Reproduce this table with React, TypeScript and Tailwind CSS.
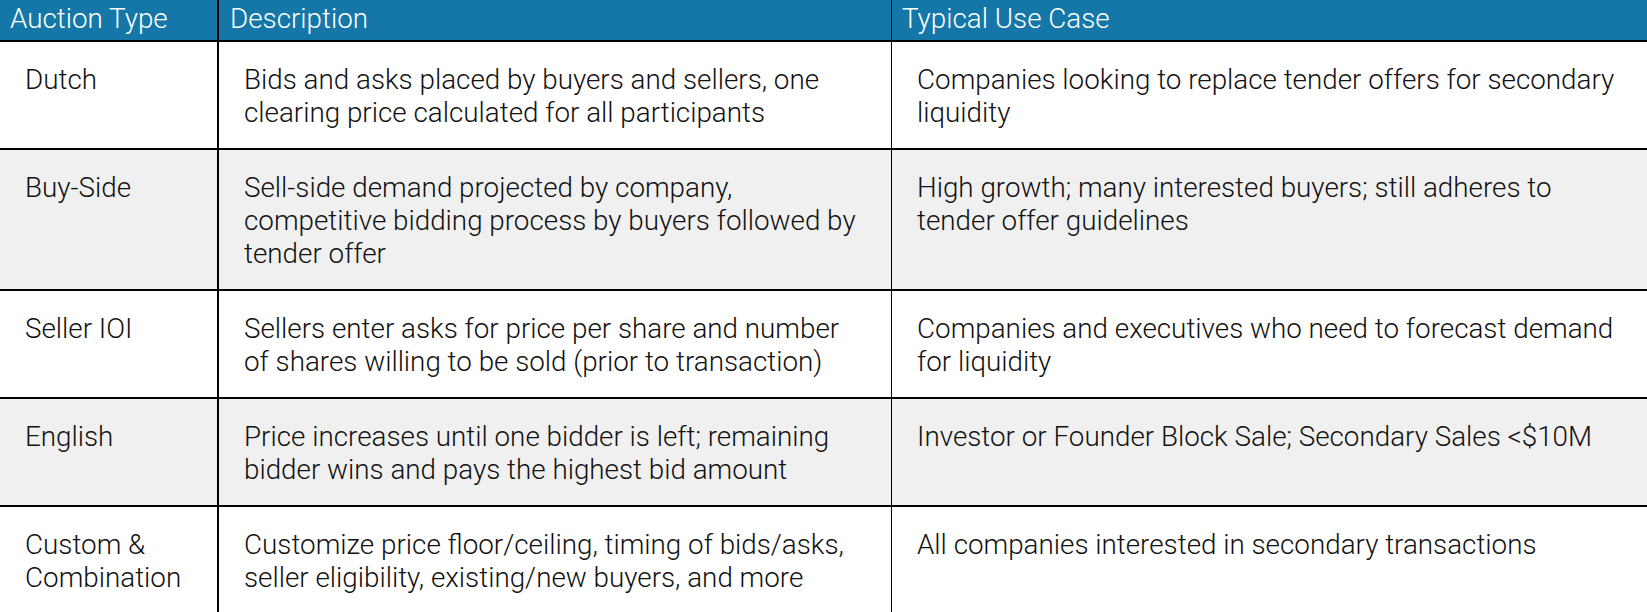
import React from "react";

type Row = { type: string[]; desc: string[]; use: string[] };

const rows: Row[] = [
  {
    type: ["Dutch"],
    desc: ["Bids and asks placed by buyers and sellers, one", "clearing price calculated for all participants"],
    use: ["Companies looking to replace tender offers for secondary", "liquidity"],
  },
  {
    type: ["Buy-Side"],
    desc: [
      "Sell-side demand projected by company,",
      "competitive bidding process by buyers followed by",
      "tender offer",
    ],
    use: ["High growth; many interested buyers; still adheres to", "tender offer guidelines"],
  },
  {
    type: ["Seller IOI"],
    desc: ["Sellers enter asks for price per share and number", "of shares willing to be sold (prior to transaction)"],
    use: ["Companies and executives who need to forecast demand", "for liquidity"],
  },
  {
    type: ["English"],
    desc: ["Price increases until one bidder is left; remaining", "bidder wins and pays the highest bid amount"],
    use: ["Investor or Founder Block Sale; Secondary Sales <$10M"],
  },
  {
    type: ["Custom &", "Combination"],
    desc: ["Customize price floor/ceiling, timing of bids/asks,", "seller eligibility, existing/new buyers, and more"],
    use: ["All companies interested in secondary transactions"],
  },
];

function Lines({ lines }: { lines: string[] }) {
  return (
    <>
      {lines.map((l, i) => (
        <div key={i} className="whitespace-nowrap">
          {l}
        </div>
      ))}
    </>
  );
}

export default function App() {
  return (
    <div
      className="w-full h-[612px] overflow-hidden bg-white text-[27.8px] leading-[33px] font-light text-[#111111]"
      style={{ fontFamily: "Roboto, 'Noto Sans', sans-serif" }}
    >
      <div className="flex h-[42px] bg-[#1577a8] text-white border-b-2 border-black">
        <div className="w-[219px] shrink-0 border-r-2 border-black pl-[10px] pt-[2px]">Auction Type</div>
        <div className="w-[673px] shrink-0 border-r border-black pl-[11px] pt-[2px]">Description</div>
        <div className="flex-1 pl-[10px] pt-[2px]">Typical Use Case</div>
      </div>
      {rows.map((r, i) => (
        <div
          key={i}
          className={`flex border-b-2 border-black ${i % 2 === 1 ? "bg-[#f0f0f0]" : "bg-white"}`}
        >
          <div className="w-[219px] shrink-0 border-r-2 border-black pl-[25px] pt-[21px] pb-[19px]">
            <Lines lines={r.type} />
          </div>
          <div className="w-[673px] shrink-0 border-r border-black pl-[25px] pt-[21px] pb-[19px]">
            <Lines lines={r.desc} />
          </div>
          <div className="flex-1 pl-[25px] pt-[21px] pb-[19px]">
            <Lines lines={r.use} />
          </div>
        </div>
      ))}
    </div>
  );
}
